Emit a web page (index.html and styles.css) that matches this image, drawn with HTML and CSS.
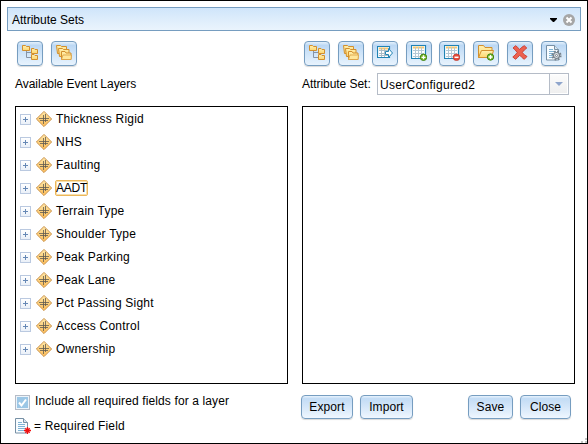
FILE: index.html
```html
<!DOCTYPE html>
<html lang="en">
<head>
<meta charset="utf-8">
<title>Attribute Sets</title>
<link rel="stylesheet" href="styles.css">
</head>
<body>
<svg class="defs" width="0" height="0">
  <defs>
    <linearGradient id="gold" x1="0" y1="0" x2="0" y2="1"><stop offset="0" stop-color="#fff0b0"/><stop offset="1" stop-color="#fdd66f"/></linearGradient>
    <linearGradient id="amber" x1="0" y1="0" x2="0" y2="1"><stop offset="0" stop-color="#ffe7a6"/><stop offset="1" stop-color="#fdbb55"/></linearGradient>
  </defs>
  <symbol id="tree" viewBox="0 0 16 16">
    <path d="M4.500 6v6.500H9M4.500 7.500H9" fill="none" stroke="#8794a5"/>
    <g fill="url(#gold)" stroke="#d2902f">
      <path d="M.5 5.500v-5h3l1 1h3v4z"/><path d="M9.500 8.500v-5h2.500l1 1h2.500v4z"/><path d="M9.500 14.500v-5h2.500l1 1h2.500v4z"/>
    </g>
  </symbol>
  <symbol id="folders" viewBox="0 0 16 16">
    <g fill="url(#gold)" stroke="#d2902f" stroke-linejoin="round">
      <path d="M1.500 8.500L.5 .5h4l1 1h5v7z"/>
      <path d="M3.500 11.500l-1-8h4l1 1h5.500v7z"/>
      <path d="M5.500 14.500V6.500h3.500l1 1.500h5v6.500z"/>
    </g>
    <path d="M5.500 14.500l1.500-4.500h8.500l-.5 4.500z" fill="#ffe79b" stroke="#dba145" stroke-width=".8"/>
  </symbol>
  <symbol id="grid" viewBox="0 0 16 16">
    <path d="M.5 .5h14v13H.5z" fill="#fff" stroke="#1f83b5" stroke-width="1.200"/>
    <path d="M2 2.500h11" stroke="#f8c86a" stroke-width="2"/>
    <path d="M2 5.500h11M2 8.500h11M2 11.500h11M4.500 2v11M7.500 2v11M10.500 2v11" stroke="#b5c9d6"/>
  </symbol>
  <symbol id="table-export" viewBox="0 0 16 16">
    <path d="M.5 1.500h12v11H.5z" fill="#fff" stroke="#1f83b5" stroke-width="1.200"/>
    <path d="M2 3.500h9" stroke="#f8c86a" stroke-width="2"/>
    <path d="M2 5.500h9M2 8.500h9M2 10.500h9M4.500 3v9M7.500 3v9" stroke="#a9bcc8"/>
    <path d="M8.500 6.500h3v-3l4 4.500-4 4.500v-3h-3z" fill="#fff" stroke="#2384b4"/>
  </symbol>
  <symbol id="table-add" viewBox="0 0 16 16">
    <use href="#grid"/><circle cx="12.500" cy="12.300" r="3.200" fill="#79b829" stroke="#408515"/><path d="M10.500 12.300h4M12.500 10.300v4" stroke="#fff" stroke-width="1.300"/>
  </symbol>
  <symbol id="table-remove" viewBox="0 0 16 16">
    <use href="#grid"/><circle cx="12.500" cy="12.300" r="3.300" fill="#e64b38" stroke="#bd3427" stroke-width=".7"/><path d="M10.500 12.300h4" stroke="#fff" stroke-width="1.500"/>
  </symbol>
  <symbol id="folder-add" viewBox="0 0 16 16">
    <path d="M.5 12.500v-12h5l1.500 2h7v10z" fill="url(#gold)" stroke="#d2902f"/>
    <path d="M.5 12.500l3-7h12l-2 7z" fill="url(#gold)" stroke="#d2902f"/>
    <circle cx="12.500" cy="12" r="3.200" fill="#79b829" stroke="#408515"/><path d="M10.500 12h4M12.500 10v4" stroke="#fff" stroke-width="1.300"/>
  </symbol>
  <symbol id="cross" viewBox="0 0 16 16">
    <path d="M1 3L3.500.7C5 1.500 6.500 3 7.600 4.500 9 2.800 10.500 1.500 12.300.7L14.800 3C13 4.200 11.500 5.700 10.200 7.500c1.500 1.600 3 3 4.800 4l-2.700 2.800c-1.800-1-3.200-2.500-4.600-4.200-1.300 1.700-2.700 3.200-4.200 4.200L.8 12c1.700-1.200 3.100-2.700 4.400-4.500C4 5.700 2.700 4.200 1 3z" fill="#ec6150" stroke="#c83a2e" stroke-width=".9"/>
  </symbol>
  <symbol id="sheet" viewBox="0 0 16 16">
    <path d="M.5 .5h8l4 4v10.500H.5z" fill="#f8fcff" stroke="#7790a5"/>
    <path d="M8.500 .5v4h4" fill="#d9e6ef" stroke="#7790a5"/>
    <path d="M3 4.500h4M3 6.500h7M3 8.500h7M3 10.500h7M3 12.500h7" stroke="#7fb4d6"/>
  </symbol>
  <symbol id="sheet-gear" viewBox="0 0 16 16">
    <use href="#sheet"/>
    <circle cx="10.500" cy="10.500" r="4.200" fill="none" stroke="#78828b" stroke-width="1.800" stroke-dasharray="1.800 1.500"/>
    <circle cx="10.500" cy="10.500" r="3" fill="#e2e6e9" stroke="#78828b" stroke-width="1.200"/>
    <circle cx="10.500" cy="10.500" r="1" fill="#fff" stroke="#78828b"/>
  </symbol>
  <symbol id="required" viewBox="0 0 16 16">
    <use href="#sheet"/>
    <path d="M12.500 9v7M9 12.500h7M10.300 10.300l4.400 4.400M14.700 10.300l-4.400 4.400" stroke="#f01010" stroke-width="1.300"/>
  </symbol>
  <symbol id="layer" viewBox="0 0 16 16">
    <path d="M8 .4L15.600 8 8 15.600.4 8z" fill="url(#amber)" stroke="#c9924a" stroke-linejoin="round"/>
    <path d="M3 7.500h10M4 9.500h8M7.500 4v9M9.500 3v8" stroke="#5f5a50" stroke-width=".8"/>
  </symbol>
</svg>

<div class="window">
  <header class="titlebar">
    <span class="title">Attribute Sets</span>
    <svg class="caret" width="7" height="4" viewBox="0 0 7 4"><path d="M0 0h7v1L4 4H3L0 1z"/></svg>
    <svg class="close" width="12" height="12" viewBox="0 0 12 12"><circle cx="6" cy="6" r="6" fill="#a6a6a6"/><path d="M3.500 3.500l5 5M8.500 3.500l-5 5" stroke="#fff" stroke-width="2"/></svg>
  </header>
  <main class="panes">
    <section class="pane">
      <div class="toolbar">
        <button class="tool"><svg><use href="#tree"/></svg></button>
        <button class="tool"><svg><use href="#folders"/></svg></button>
      </div>
      <div class="caption"><span class="available">Available Event Layers</span></div>
      <ul class="box">
        <li><i class="plus"></i><svg><use href="#layer"/></svg><span>Thickness Rigid</span></li>
        <li><i class="plus"></i><svg><use href="#layer"/></svg><span>NHS</span></li>
        <li><i class="plus"></i><svg><use href="#layer"/></svg><span>Faulting</span></li>
        <li><i class="plus"></i><svg><use href="#layer"/></svg><span class="focused">AADT</span></li>
        <li><i class="plus"></i><svg><use href="#layer"/></svg><span>Terrain Type</span></li>
        <li><i class="plus"></i><svg><use href="#layer"/></svg><span>Shoulder Type</span></li>
        <li><i class="plus"></i><svg><use href="#layer"/></svg><span>Peak Parking</span></li>
        <li><i class="plus"></i><svg><use href="#layer"/></svg><span>Peak Lane</span></li>
        <li><i class="plus"></i><svg><use href="#layer"/></svg><span>Pct Passing Sight</span></li>
        <li><i class="plus"></i><svg><use href="#layer"/></svg><span>Access Control</span></li>
        <li><i class="plus"></i><svg><use href="#layer"/></svg><span>Ownership</span></li>
      </ul>
      <div class="notes">
        <div class="include"><span class="check"><svg width="11" height="11" viewBox="0 0 11 11"><path d="M2 5.500l2.500 3L9 2.500" fill="none" stroke="#fff" stroke-width="2"/></svg></span><span>Include all required fields for a layer</span></div>
        <div class="legend"><svg><use href="#required"/></svg><span>= Required Field</span></div>
      </div>
    </section>
    <section class="pane">
      <div class="toolbar right">
        <button class="tool"><svg><use href="#tree"/></svg></button>
        <button class="tool"><svg><use href="#folders"/></svg></button>
        <button class="tool"><svg><use href="#table-export"/></svg></button>
        <button class="tool"><svg><use href="#table-add"/></svg></button>
        <button class="tool"><svg><use href="#table-remove"/></svg></button>
        <button class="tool"><svg><use href="#folder-add"/></svg></button>
        <button class="tool"><svg><use href="#cross"/></svg></button>
        <button class="tool"><svg><use href="#sheet-gear"/></svg></button>
      </div>
      <div class="caption"><span class="set">Attribute Set:</span>
        <div class="combo"><span>UserConfigured2</span><div class="drop"><svg width="8" height="4" viewBox="0 0 8 4"><path d="M0 0h8L4 4z" fill="#8fa5cc"/></svg></div></div>
      </div>
      <div class="box"></div>
      <div class="actions">
        <button class="export">Export</button><button class="import">Import</button><button class="save">Save</button><button class="dismiss">Close</button>
      </div>
    </section>
  </main>
  <svg class="grip" width="6" height="5" viewBox="0 0 6 5"><path d="M4 0h2v2H4zM0 3h2v2H0zM4 3h2v2H4z" fill="#c5c5c5"/></svg>
</div>
</body>
</html>
```
FILE: styles.css
```css
* { box-sizing: border-box; }
body { margin: 0; font: 12px/16px "Liberation Sans", Arial, sans-serif; color: #000; background: #fff; }
.defs { position: absolute; }
.window { position: relative; width: 588px; height: 444px; border: 1px solid #000; padding: 6px; overflow: hidden; }
.titlebar { display: flex; align-items: center; width: 574px; height: 24px; padding: 2px 5px 0 4px; border: 1px solid #769dc0; background: linear-gradient(#cfe5fa 0, #dcecfb 45%, #eaf4fd); }
.title { flex: 1; }
.caret { margin: 0 6px 1px 0; }
.close { margin-bottom: 1px; }
.panes { display: grid; grid-template-columns: 273px 273px; gap: 14px; padding: 10px 0 0 8px; }
.toolbar { display: flex; gap: 8px; height: 25px; padding-left: 2px; }
.toolbar.right { gap: 7.860px; }
.tool { flex: none; display: flex; align-items: center; justify-content: center; width: 26px; height: 25px; padding: 0 0 1px; border: 1px solid #769dc0; border-radius: 4px; background: linear-gradient(#e4f1fc 0, #bcd8f4 15%, #cde3f8 45%, #e8f3fd); box-shadow: 0 1px 1px rgba(0,0,0,.15); }
.tool svg, .box svg, .legend svg { display: block; flex: none; width: 16px; height: 16px; }
.caption { display: flex; height: 40px; padding-top: 7px; }
.caption > span { padding-top: 3px; }
.available { letter-spacing: -.03px; }
.set { width: 75px; letter-spacing: -.05px; }
.combo { display: flex; width: 192px; height: 22px; border: 1px solid #b5bcc7; }
.combo > span { flex: 1; padding: 3px 0 0 2px; letter-spacing: .3px; }
.drop { display: flex; align-items: center; justify-content: center; width: 18px; border: 1px solid #fff; border-left: 0; outline: 0; background: linear-gradient(#fcfcfc, #efefef); box-shadow: -1px 0 #b5bcc7; }
.box { width: 273px; height: 278px; margin: 0; padding: 0 0 0 4px; border: 1px solid #000; list-style: none; }
.box li { display: flex; align-items: center; height: 23px; }
.plus { width: 11px; height: 11px; margin: 1px 5px 0 0; border: 1px solid #bac9e0; background: linear-gradient(#6688b5, #6688b5) center/5px 1px no-repeat, linear-gradient(#6688b5, #6688b5) center/1px 5px no-repeat, linear-gradient(#fff, #eaf0f8); }
.box li span { margin-left: 3px; padding: 0 1px; line-height: 16px; letter-spacing: .22px; }
.box li .focused { padding: 0; border: 1px solid #ecb75a; border-radius: 2px; line-height: 14px; letter-spacing: -.2px; box-shadow: inset 0 0 0 1px #f8dfab; }
.notes { padding-top: 9px; }
.include { display: flex; height: 25px; }
.include > span:last-child { margin-left: 5px; letter-spacing: .12px; }
.check { display: flex; align-items: center; justify-content: center; width: 15px; height: 15px; margin-top: 2px; border: 1px solid #b5bcc7; background: #9cc7e6; box-shadow: inset 0 0 0 1px #edf4fa; }
.legend { display: flex; }
.legend span { margin-left: 3px; letter-spacing: .15px; }
.actions { display: flex; width: 269px; margin-left: -1px; padding-top: 11px; }
.actions button { height: 24px; padding: 0; font: inherit; letter-spacing: .1px; border: 1px solid #769dc0; border-radius: 4px; background: linear-gradient(#e8f3fd 0, #c3dcf5 12%, #d2e5f8 45%, #eff7ff); box-shadow: 0 1px 1px rgba(0,0,0,.15); }
.actions .export { width: 52px; margin-right: 7px; }
.actions .import { width: 53px; margin-right: auto; }
.actions .save { width: 45px; margin-right: 7px; }
.actions .dismiss { width: 51px; margin-right: -1px; }
.grip { position: absolute; right: 0; bottom: 0; }
```
